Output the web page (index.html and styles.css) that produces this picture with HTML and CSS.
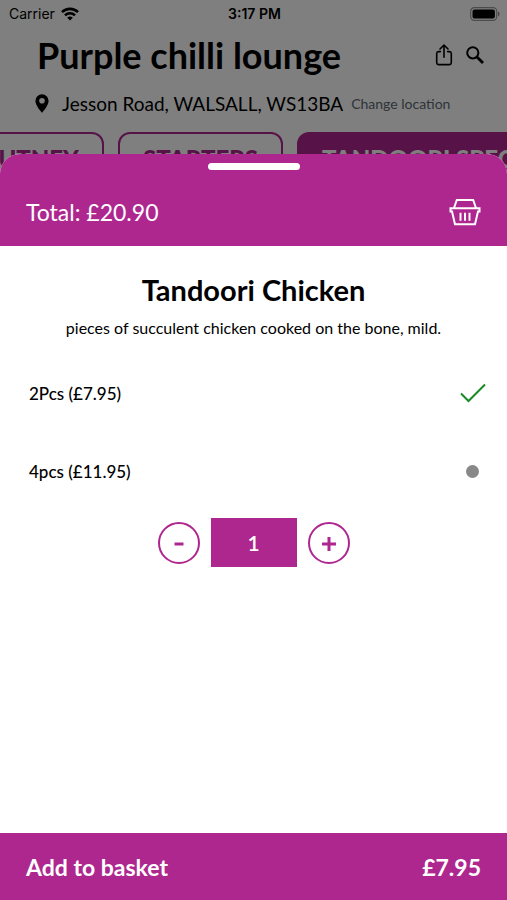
FILE: index.html
```html
<!DOCTYPE html>
<html lang="en">
<head>
<meta charset="utf-8">
<meta name="viewport" content="width=device-width, initial-scale=1">
<title>Purple chilli lounge</title>
<link rel="stylesheet" href="styles.css">
</head>
<body>
<div class="app">
  <div class="page">
    <div class="status">
      <span class="carrier">Carrier
        <svg width="18" height="14" viewBox="0 0 18 14" fill="none" stroke="#000" stroke-width="2.6" aria-hidden="true"><path d="M1 5.2a11.3 11.3 0 0 1 16 0M4 8.4a7 7 0 0 1 10 0"/><path d="M6.2 10.8a4 4 0 0 1 5.6 0L9 13.6z" fill="#000" stroke="none"/></svg>
      </span>
      <span class="time">3:17 PM</span>
      <svg class="battery" width="30" height="14" viewBox="0 0 30 14" aria-hidden="true"><rect x=".7" y=".7" width="26" height="12.6" rx="3.6" fill="none" stroke="#999" stroke-width="1.2"/><rect x="2.5" y="2.5" width="22.4" height="9" rx="2"/><path d="M28 4.6c2 .8 2 4 0 4.8z" fill="#888"/></svg>
    </div>
    <header class="head">
      <h1>Purple chilli lounge</h1>
      <div class="tools">
        <button type="button" aria-label="Share"><svg width="18" height="22" viewBox="0 0 18 22" fill="none" stroke="#000" stroke-width="1.6" stroke-linejoin="round" stroke-linecap="round"><path d="M5.4 7.6H3.6A2 2 0 0 0 1.7 9.5v9.2a2 2 0 0 0 1.9 1.9h10.8a2 2 0 0 0 1.9-1.9V9.5a2 2 0 0 0-1.9-1.9h-1.8M9 13.2V1.2M5 5l4-4 4 4"/></svg></button>
        <button type="button" aria-label="Search"><svg width="18" height="18" viewBox="0 0 18 18" fill="none" stroke="#000"><circle cx="6.8" cy="6.8" r="5.6" stroke-width="2"/><path d="M11 11l6 6" stroke-width="2.8"/></svg></button>
      </div>
    </header>
    <div class="place">
      <svg width="14" height="19" viewBox="0 0 14 19" aria-hidden="true"><path fill-rule="evenodd" d="M7 .3A6.6 6.6 0 0 0 .4 6.900C.4 11.5 7 18.7 7 18.7s6.6-7.2 6.6-11.8A6.6 6.6 0 0 0 7 .3zM7 4a2.8 2.8 0 1 1 0 5.6A2.8 2.8 0 0 1 7 4z"/></svg>
      <span class="address">Jesson Road, WALSALL, WS13BA</span>
      <a href="#location">Change location</a>
    </div>
    <nav class="tabs">
      <button type="button">CHUTNEY</button>
      <button type="button">STARTERS</button>
      <button type="button" class="current">TANDOORI SPECIALS</button>
    </nav>
    <div class="shade"></div>
  </div>

  <main class="sheet">
    <div class="sheet-head">
      <span class="grip"></span>
      <div class="total">
        <span>Total: £20.90</span>
        <button type="button" aria-label="Basket"><svg width="32" height="28" viewBox="0 0 32 28" fill="none" stroke="#fff" stroke-width="2"><path d="M5.2 9.5L7.8 2h16.4l2.6 7.5M1.5 10.2h29v3.4h-1.5L26 26.2H6L3 13.6H1.5z"/><path d="M11.5 14.8v8M16 14.8v8M20.5 14.8v8"/></svg></button>
      </div>
    </div>

    <form class="item" id="item">
      <h2>Tandoori Chicken</h2>
      <p>pieces of succulent chicken cooked on the bone, mild.</p>
      <label class="option">
        <span>2Pcs (£7.95)</span>
        <input type="radio" name="size" checked>
        <svg class="tick" width="26" height="20" viewBox="0 0 26 20" fill="none" stroke="#178a24" stroke-width="2" aria-hidden="true"><path d="M1 10.5l7.5 7.5L25 1.5"/></svg>
        <i class="dot"></i>
      </label>
      <label class="option">
        <span>4pcs (£11.95)</span>
        <input type="radio" name="size">
        <svg class="tick" width="26" height="20" viewBox="0 0 26 20" fill="none" stroke="#178a24" stroke-width="2" aria-hidden="true"><path d="M1 10.5l7.5 7.5L25 1.5"/></svg>
        <i class="dot"></i>
      </label>
      <div class="quantity">
        <button type="button" aria-label="Fewer"><svg width="16" height="16" viewBox="0 0 16 16" stroke="#ae278f" stroke-width="3"><path d="M3.5 9h9"/></svg></button>
        <output>1</output>
        <button type="button" aria-label="More"><svg width="16" height="16" viewBox="0 0 16 16" stroke="#ae278f" stroke-width="3"><path d="M1 9h14M8 2v14"/></svg></button>
      </div>
    </form>

    <button class="add" type="submit" form="item"><span>Add to basket</span><span>£7.95</span></button>
  </main>
</div>
</body>
</html>
```
FILE: styles.css
```css
* {
  box-sizing: border-box;
}

body {
  margin: 0;
  background: #fff;
  color: #000;
  font-family: Lato, "Liberation Sans", sans-serif;
}

button {
  margin: 0;
  padding: 0;
  border: 0;
  background: none;
  color: inherit;
  font: inherit;
}

svg {
  display: block;
}

h1, h2, p {
  margin: 0;
}

.app {
  display: flex;
  flex-direction: column;
  min-height: 100vh;
}

.page {
  position: relative;
  overflow: hidden;
}

.shade {
  position: absolute;
  inset: 0;
  background: rgba(0, 0, 0, 0.5);
}

.status {
  display: grid;
  grid-template-columns: 1fr auto 1fr;
  align-items: center;
  height: 28px;
  padding: 0 7px 0 9px;
  font: 14px/28px Inter, sans-serif;
}

.carrier {
  display: flex;
  align-items: center;
  gap: 6px;
}

.time {
  font-weight: 600;
}

.battery {
  justify-self: end;
}

.head {
  display: flex;
  align-items: center;
  justify-content: space-between;
  height: 54px;
  padding: 0 23px 0 37px;
}

h1 {
  font-size: 36px;
  line-height: 54px;
  font-weight: 700;
}

.tools {
  display: flex;
  align-items: center;
  gap: 13px;
}

.place {
  display: flex;
  align-items: center;
  height: 42px;
  padding-left: 35px;
}

.address {
  margin: 0 8px 0 13px;
  font-size: 19px;
}

.place a {
  color: #5a6a72;
  font-size: 14px;
  text-decoration: none;
}

.tabs {
  display: flex;
  gap: 14px;
  margin: 8px 0 0 -61px;
}

.tabs button {
  flex: none;
  height: 48px;
  padding: 4px 23px 0;
  border: 2px solid #ae278f;
  border-radius: 12px;
  color: #ae278f;
  font-size: 24px;
  font-weight: 900;
}

.tabs .current {
  background: #ae278f;
  color: #fff;
}

.sheet {
  position: relative;
  display: flex;
  flex: 1;
  flex-direction: column;
  margin-top: -26px;
  border-radius: 20px 20px 0 0;
  background: #fff;
}

.sheet-head {
  height: 92px;
  padding-top: 9px;
  border-radius: 20px 20px 0 0;
  background: #ae278f;
  color: #fff;
}

.grip {
  display: block;
  width: 92px;
  height: 7px;
  margin: 0 auto;
  border-radius: 4px;
  background: #fff;
}

.total {
  display: flex;
  align-items: center;
  justify-content: space-between;
  margin-top: 26px;
  padding: 0 26px;
  font-size: 23px;
  line-height: 32px;
}

.item {
  flex: 1;
  padding-top: 24px;
}

h2 {
  font-size: 29px;
  line-height: 40px;
  font-weight: 700;
  text-align: center;
}

.item p {
  margin: 7px 0 15px;
  font-size: 16px;
  line-height: 22px;
  text-align: center;
}

.option {
  position: relative;
  display: flex;
  align-items: center;
  justify-content: space-between;
  height: 78px;
  padding: 0 21px 0 29px;
  font-size: 17px;
  font-weight: 500;
}

.option input {
  position: absolute;
  right: 21px;
  width: 26px;
  height: 26px;
  margin: 0;
  opacity: 0;
}

.tick {
  display: none;
}

.dot {
  width: 13px;
  height: 13px;
  margin-right: 7px;
  border-radius: 50%;
  background: #888;
}

.option input:checked ~ .tick {
  display: block;
}

.option input:checked ~ .dot {
  display: none;
}

.quantity {
  display: flex;
  align-items: center;
  justify-content: center;
  gap: 11px;
  margin-top: 8px;
}

.quantity button {
  display: grid;
  place-items: center;
  width: 42px;
  height: 42px;
  border: 2px solid #ae278f;
  border-radius: 50%;
}

.quantity output {
  width: 86px;
  background: #ae278f;
  color: #fff;
  font-size: 21px;
  font-weight: 600;
  line-height: 49px;
  text-align: center;
}

.add {
  display: flex;
  align-items: center;
  justify-content: space-between;
  height: 67px;
  padding: 0 26px;
  background: #ae278f;
  color: #fff;
  font-size: 23px;
  font-weight: 700;
}
```
